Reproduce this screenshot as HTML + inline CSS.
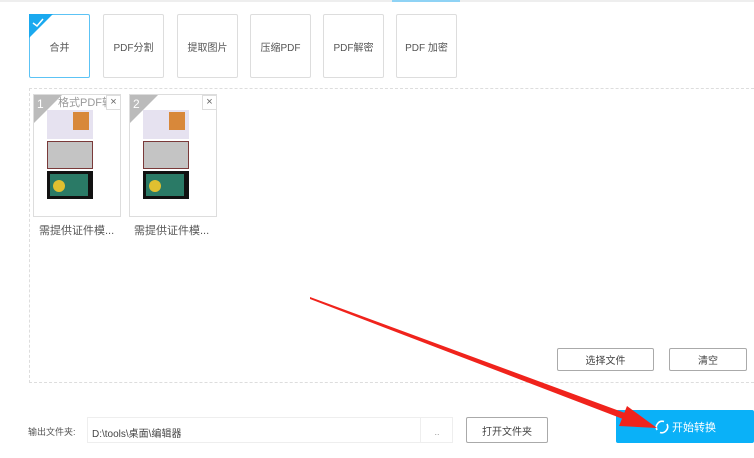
<!DOCTYPE html>
<html><head><meta charset="utf-8"><style>
*{margin:0;padding:0;box-sizing:border-box}
body{width:754px;height:458px;background:#fff;position:relative;overflow:hidden;font-family:"Liberation Sans","Noto Sans CJK SC",sans-serif;color:#555}
.abs{position:absolute}
.tile{position:absolute;top:14px;width:61px;height:64px;border:1px solid #ddd;border-radius:2px;font-size:10px;color:#555;display:flex;align-items:center;justify-content:center}
.thumb{position:absolute;top:94px;width:88px;height:123px;border:1px solid #ddd;background:#fff}
.btn{position:absolute;border:1px solid #aaa;border-radius:2px;font-size:10px;display:flex;align-items:center;justify-content:center;color:#444}
</style></head><body>
<div class="abs" style="left:0;top:0;width:754px;height:2px;background:#eee"></div>
<div class="abs" style="left:392px;top:0;width:68px;height:2px;background:#8fd3f5"></div>

<div class="tile" style="left:29px;border-color:#5cc3f5">合并
<svg class="abs" style="left:-1px;top:-1px" width="26" height="26"><polygon points="0,0 24,0 0,24" fill="#1aa9ef"/><path d="M4 9 L8 12 L14 5" stroke="#fff" stroke-width="1.5" fill="none"/></svg></div>
<div class="tile" style="left:103px">PDF分割</div>
<div class="tile" style="left:177px">提取图片</div>
<div class="tile" style="left:250px">压缩PDF</div>
<div class="tile" style="left:323px">PDF解密</div>
<div class="tile" style="left:396px">PDF 加密</div>

<div class="abs" style="left:29px;top:88px;width:740px;height:295px;border:1px dashed #ddd"></div>

<div class="thumb" style="left:33px">
<div class="abs" style="left:24px;top:-1px;font-size:11px;color:#999;width:48px;overflow:hidden;white-space:nowrap">格式PDF转换</div>
<svg class="abs" style="left:0;top:0" width="30" height="30"><polygon points="0,0 28,0 0,28" fill="#bbb"/><text x="3" y="13" font-size="12" fill="#fff" font-family="Liberation Sans">1</text></svg>
<div class="abs" style="left:72px;top:0;width:15px;height:15px;background:#fff;border:1px solid #ddd;font-size:11px;text-align:center;line-height:13px;color:#666">×</div>
<div class="abs" style="left:13px;top:15px;width:46px;height:29px;background:#e6e2f0"><div class="abs" style="left:26px;top:2px;width:16px;height:18px;background:#d8883a"></div></div>
<div class="abs" style="left:13px;top:46px;width:46px;height:28px;background:#c4c4c4;border:1px solid #7a3a3a"></div>
<div class="abs" style="left:13px;top:76px;width:46px;height:28px;background:#111"><div class="abs" style="left:3px;top:3px;width:38px;height:22px;background:#2a7a66"></div><div class="abs" style="left:6px;top:9px;width:12px;height:12px;border-radius:50%;background:#e0c030"></div></div>
</div>
<div class="thumb" style="left:129px">
<svg class="abs" style="left:0;top:0" width="30" height="30"><polygon points="0,0 28,0 0,28" fill="#bbb"/><text x="3" y="13" font-size="12" fill="#fff" font-family="Liberation Sans">2</text></svg>
<div class="abs" style="left:72px;top:0;width:15px;height:15px;background:#fff;border:1px solid #ddd;font-size:11px;text-align:center;line-height:13px;color:#666">×</div>
<div class="abs" style="left:13px;top:15px;width:46px;height:29px;background:#e6e2f0"><div class="abs" style="left:26px;top:2px;width:16px;height:18px;background:#d8883a"></div></div>
<div class="abs" style="left:13px;top:46px;width:46px;height:28px;background:#c4c4c4;border:1px solid #7a3a3a"></div>
<div class="abs" style="left:13px;top:76px;width:46px;height:28px;background:#111"><div class="abs" style="left:3px;top:3px;width:38px;height:22px;background:#2a7a66"></div><div class="abs" style="left:6px;top:9px;width:12px;height:12px;border-radius:50%;background:#e0c030"></div></div>
</div>
<div class="abs" style="left:39px;top:222px;font-size:11px;color:#555">需提供证件模...</div>
<div class="abs" style="left:134px;top:222px;font-size:11px;color:#555">需提供证件模...</div>

<div class="btn" style="left:557px;top:348px;width:97px;height:23px">选择文件</div>
<div class="btn" style="left:669px;top:348px;width:78px;height:23px">清空</div>

<div class="abs" style="left:28px;top:425px;font-size:9px;color:#555">输出文件夹:</div>
<div class="abs" style="left:87px;top:417px;width:366px;height:26px;border:1px solid #eee;font-size:10px;color:#444;padding:7px 0 0 4px">D:\tools\桌面\编辑器</div>
<div class="abs" style="left:420px;top:417px;width:33px;height:26px;border-left:1px solid #eee;font-size:9px;color:#999;text-align:center;line-height:30px">..</div>
<div class="btn" style="left:466px;top:417px;width:82px;height:26px">打开文件夹</div>
<div class="abs" style="left:616px;top:410px;width:138px;height:33px;background:#0ab1f8;border-radius:2px;color:#fff;font-size:11px;padding:9px 0 0 56px">开始转换
<svg class="abs" style="left:38px;top:9px" width="16" height="16"><path d="M3 11 A6 6 0 0 1 10 2.5 M13 5 A6 6 0 0 1 6 13.5" stroke="#fff" stroke-width="1.6" fill="none"/></svg></div>

<svg class="abs" style="left:0;top:0" width="754" height="458"><polygon points="310,297 625,413 623,419 310,299" fill="#f0231c"/><polygon points="657,428 627,406 619,426" fill="#f0231c"/></svg>
</body></html>
